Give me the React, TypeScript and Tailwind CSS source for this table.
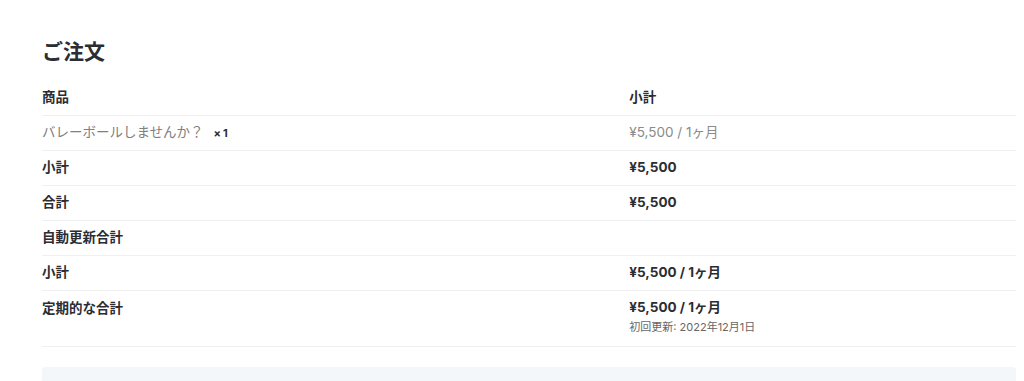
import React from 'react';

const rows = [
  { label: '小計', value: '¥5,500' },
  { label: '合計', value: '¥5,500' },
];

export default function App() {
  return (
    <div
      className="min-h-[381px] bg-white pl-[42px] pr-[8px] pt-[38px] text-[#2b2d33]"
      style={{ fontFamily: 'Inter, "Noto Sans CJK JP", "Noto Sans", sans-serif' }}
    >
      {/* Heading */}
      <h2 className="text-[21px] font-bold leading-[28px] mb-[14px]">ご注文</h2>

      <table className="w-full border-collapse text-[13.5px]">
        <thead>
          <tr className="border-b border-[#f0f0f2]">
            <th className="w-[60.3%] h-[35px] p-0 text-left font-bold">商品</th>
            <th className="h-[35px] p-0 text-left font-bold">小計</th>
          </tr>
        </thead>
        <tbody>
          <tr className="border-b border-[#f0f0f2]">
            <td className="h-[35px] p-0 text-[#808080]">
              バレーボールしませんか？
              <strong className="ml-[10px] text-[11px] font-bold text-[#2b2d33]">
                <span className="mr-[2px]">×</span>1
              </strong>
            </td>
            <td className="h-[35px] p-0 text-[#8a8a8a]">¥5,500 / 1ヶ月</td>
          </tr>
        </tbody>
        <tfoot>
          {rows.map((r) => (
            <tr key={r.label} className="border-b border-[#f0f0f2] last:border-[#e9eaee]">
              <th className="h-[35px] p-0 text-left font-bold">{r.label}</th>
              <td className="h-[35px] p-0 font-bold">{r.value}</td>
            </tr>
          ))}
          <tr className="border-b border-[#f0f0f2]">
            <th className="h-[35px] p-0 text-left font-bold">自動更新合計</th>
            <td className="h-[35px] p-0"></td>
          </tr>
          <tr className="border-b border-[#f0f0f2]">
            <th className="h-[35px] p-0 text-left font-bold">小計</th>
            <td className="h-[35px] p-0 font-bold">¥5,500 / 1ヶ月</td>
          </tr>
          <tr className="border-b border-[#f0f0f2]">
            <th className="h-[56px] p-0 pt-[7px] align-top text-left font-bold">定期的な合計</th>
            <td className="h-[56px] p-0 pt-[7px] align-top">
              <div className="font-bold leading-[19px]">¥5,500 / 1ヶ月</div>
              <div className="mt-[2px] text-[11px] leading-[16px] text-[#666]">初回更新: 2022年12月1日</div>
            </td>
          </tr>
        </tfoot>
      </table>

      {/* Next section box */}
      <div className="mt-[20px] h-[40px] rounded-t-[3px] bg-[#f4f7fa]"></div>
    </div>
  );
}
